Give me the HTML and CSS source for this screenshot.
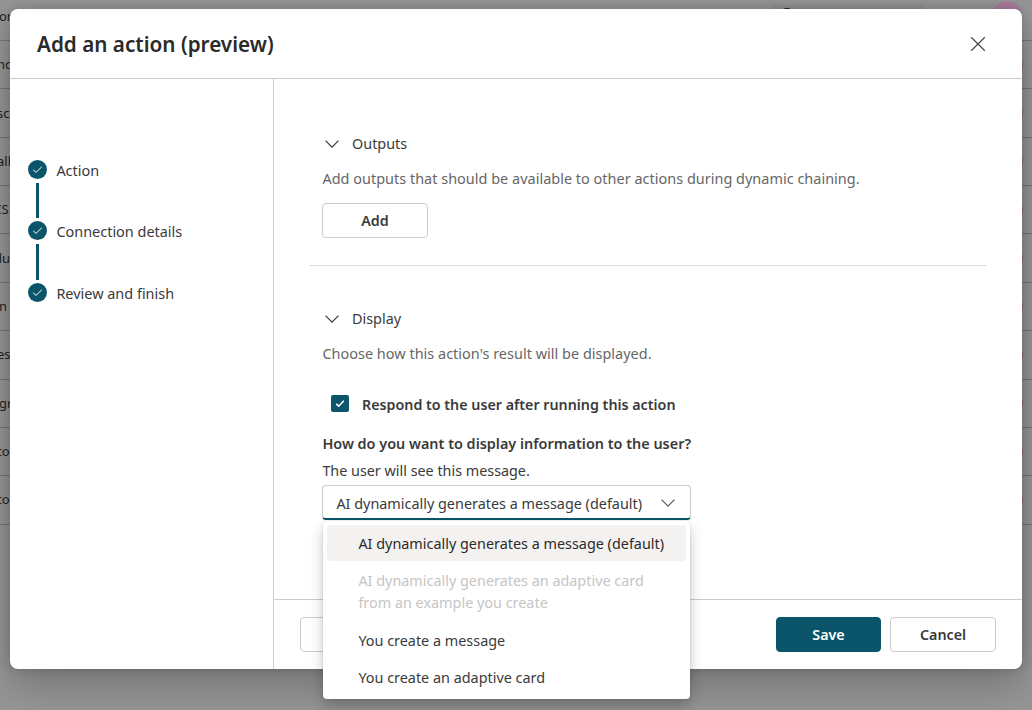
FILE: index.html
```html
<!DOCTYPE html>
<html lang="en">
<head>
<meta charset="utf-8">
<title>Add an action (preview)</title>
<link rel="stylesheet" href="styles.css">
</head>
<body>
<div class="page" aria-hidden="true">
  <div class="row row-top"><span>or</span><div class="search"><svg width="12" height="12" viewBox="0 0 12 12"><circle cx="6" cy="6" r="4.6" fill="none" stroke="#222" stroke-width="1.4"/></svg></div><i class="avatar"></i></div>
  <div class="row"><span class="cut">nd</span><i class="dot"></i></div>
  <div class="row"><span class="cut">sca</span><i class="dot"></i></div>
  <div class="row"><span class="cut">all</span><i class="dot"></i></div>
  <div class="row"><span class="cut">IS</span><i class="dot"></i></div>
  <div class="row"><span class="cut-wide">du</span><i class="dot"></i></div>
  <div class="row"><span>n</span><i class="dot"></i></div>
  <div class="row"><span class="cut">es</span><i class="dot"></i></div>
  <div class="row"><span>gr</span><i class="dot"></i></div>
  <div class="row"><span class="cut">tor</span><i class="dot"></i></div>
  <div class="row"><span class="cut">tor</span><i class="dot"></i></div>
</div>
<div class="dialog" role="dialog">
  <header class="head">
    <h1>Add an action (preview)</h1>
    <svg class="close" width="16" height="16" viewBox="0 0 16 16"><path d="M1.2 1.2 14.8 14.8M14.8 1.2 1.2 14.8" fill="none" stroke="#4a4a4a" stroke-width="1.25"/></svg>
  </header>
  <div class="body">
    <nav class="steps">
      <div class="step"><span class="badge"><svg width="19" height="19" viewBox="0 0 19 19"><path d="M5.2 9.8 8 12.4 13.8 6.8" fill="none" stroke="#fff" stroke-width="1"/></svg></span><span>Action</span></div>
      <div class="bar"></div>
      <div class="step"><span class="badge"><svg width="19" height="19" viewBox="0 0 19 19"><path d="M5.2 9.8 8 12.4 13.8 6.8" fill="none" stroke="#fff" stroke-width="1"/></svg></span><span>Connection details</span></div>
      <div class="bar"></div>
      <div class="step"><span class="badge"><svg width="19" height="19" viewBox="0 0 19 19"><path d="M5.2 9.8 8 12.4 13.8 6.8" fill="none" stroke="#fff" stroke-width="1"/></svg></span><span>Review and finish</span></div>
    </nav>
    <main class="main">
      <div class="content">
        <section class="outputs">
          <h2><svg width="16" height="16" viewBox="0 0 16 16"><path d="M1.5 4.7 8 11.2 14.5 4.7" fill="none" stroke="#333" stroke-width="1.15"/></svg>Outputs</h2>
          <p class="hint">Add outputs that should be available to other actions during dynamic chaining.</p>
          <button class="btn">Add</button>
        </section>
        <div class="rule"></div>
        <section class="display">
          <h2><svg width="16" height="16" viewBox="0 0 16 16"><path d="M1.5 4.7 8 11.2 14.5 4.7" fill="none" stroke="#333" stroke-width="1.15"/></svg>Display</h2>
          <p class="hint">Choose how this action's result will be displayed.</p>
          <div class="check"><span class="box"><svg width="18" height="17" viewBox="0 0 18 17"><path d="M5.2 8.8 7.7 11.2 12.8 5.7" fill="none" stroke="#fff" stroke-width="1.6"/></svg></span><span>Respond to the user after running this action</span></div>
          <div class="label">How do you want to display information to the user?</div>
          <p class="sub">The user will see this message.</p>
          <div class="combo">
            <div class="select"><span>AI dynamically generates a message (default)</span><svg width="16" height="16" viewBox="0 0 16 16"><path d="M1.5 4.7 8 11.2 14.5 4.7" fill="none" stroke="#555" stroke-width="1.15"/></svg></div>
            <ul class="menu">
              <li class="current">AI dynamically generates a message (default)</li>
              <li class="disabled">AI dynamically generates an adaptive card from an example you create</li>
              <li>You create a message</li>
              <li>You create an adaptive card</li>
            </ul>
          </div>
        </section>
      </div>
      <footer class="foot">
        <button class="btn back"></button>
        <button class="btn primary">Save</button>
        <button class="btn">Cancel</button>
      </footer>
    </main>
  </div>
</div>
</body>
</html>
```
FILE: styles.css
```css
* { box-sizing: border-box; }
body {
  margin: 0;
  width: 1032px;
  height: 710px;
  overflow: hidden;
  background: #969696;
  font: 14.45px/22px "Noto Sans", sans-serif;
  color: #3a3a3a;
}
h1, h2, p, ul { margin: 0; padding: 0; }
svg { display: block; flex: none; }

/* Dimmed list behind the dialog */
.page {
  position: absolute;
  inset: 0;
  overflow: hidden;
  font-size: 13px;
  color: #222;
}
.row {
  display: flex;
  align-items: center;
  justify-content: space-between;
  height: 48.36px;
  border-bottom: 1px solid #777;
}
.row span { width: 30px; margin: -1px 0 0 -1px; white-space: nowrap; }
.row .cut { margin-left: -3px; }
.row .cut-wide { margin-left: -6px; }
.row-top { height: 41px; }
.row-top span { margin-top: -8px; }
.search {
  width: 152px;
  height: 32px;
  margin: 0 0 0 auto;
  padding: 3px 9px;
  border-radius: 4px;
  background: #92918e;
}
.avatar {
  width: 30px;
  height: 30px;
  margin: -9px 10px 0 68px;
  border-radius: 50%;
  background: #a87c9b;
}
.dot {
  width: 24px;
  height: 24px;
  margin-right: 9px;
  border-radius: 50%;
  background: #8c6480;
}

.dialog {
  position: absolute;
  top: 9px;
  left: 10px;
  width: 1012px;
  height: 660px;
  display: flex;
  flex-direction: column;
  border-radius: 8px;
  background: #fff;
  box-shadow: 0 0 8px rgba(0, 0, 0, .16), 0 14px 42px rgba(0, 0, 0, .26);
}
.head {
  display: flex;
  align-items: center;
  justify-content: space-between;
  height: 70px;
  padding: 1px 36px 0 27px;
  border-bottom: 1px solid #ccc;
}
h1 {
  font-size: 20.7px;
  font-weight: 600;
  line-height: 28px;
  color: #2b2a29;
}
.body { display: flex; flex: 1; min-height: 0; }
.steps {
  width: 264px;
  padding: 80px 0 0 18px;
  border-right: 1px solid #ccc;
}
.step { display: flex; align-items: center; gap: 9.4px; height: 20px; }
.step > span:last-child { padding-top: 3px; }
.badge { width: 19px; height: 19px; border-radius: 50%; background: #0b556a; }
.bar { width: 3px; height: 35.5px; margin: 3.5px 0 2.7px 8px; background: #0b556a; }

.main { display: flex; flex: 1; flex-direction: column; }
.content { flex: 1; padding: 53px 35px 0; }
.outputs, .display { padding-left: 13px; }
h2 {
  display: flex;
  align-items: center;
  gap: 12px;
  height: 24px;
  padding-left: 2px;
  font-size: 14.4px;
  font-weight: 400;
}
.hint { margin-top: 12px; padding-left: .4px; font-size: 14.45px; letter-spacing: .02px; color: #666; }
.btn {
  width: 106px;
  height: 35px;
  padding: 0;
  border: 1px solid #ccc;
  border-radius: 4px;
  background: #fff;
  font: 600 14.3px/20px "Noto Sans", sans-serif;
  color: #3a3a3a;
}
.outputs .btn { display: block; margin-top: 13px; }
.rule { height: 1px; margin: 27px 0 41px; background: #dcdcdc; }
.check {
  display: flex;
  align-items: flex-start;
  gap: 13px;
  height: 22px;
  margin: 29px 0 17px 9px;
  font-size: 14.27px;
  font-weight: 600;
}
.check .box { width: 18px; height: 17px; margin-top: 1px; border-radius: 2px; background: #0b556a; }
.label { padding-left: .4px; font-size: 14.42px; font-weight: 600; }
.sub { margin: 5px 0 3px; padding-left: .4px; font-size: 14.35px; }
.combo { position: relative; width: 369px; font-size: 14.4px; }
.select {
  display: flex;
  align-items: center;
  justify-content: space-between;
  height: 35px;
  padding: 2px 14px 0 13.4px;
  border: 1px solid #ccc;
  border-bottom: 2px solid #0b556a;
  border-radius: 4px;
}
.select span { padding-top: 1px; }
.menu {
  position: absolute;
  z-index: 2;
  top: 36px;
  left: 1px;
  width: 367px;
  height: 178px;
  padding: 4px 4px 3px;
  display: flex;
  flex-direction: column;
  gap: 1.4px;
  list-style: none;
  border-radius: 4px;
  background: #fff;
  box-shadow: 0 0 2px rgba(0, 0, 0, .18), 0 7px 14px rgba(0, 0, 0, .22);
}
.menu li { padding: 8px 20px 6px 31.4px; border-radius: 4px; }
.menu .current { background: #f3f2f1; color: #2b2a29; }
.menu .disabled { color: #c5c5c5; }

.foot {
  display: flex;
  align-items: center;
  gap: 9px;
  height: 70px;
  padding: 0 26px;
  border-top: 1px solid #ccc;
}
.foot .back { margin-right: auto; }
.foot .primary { width: 105px; border-color: #0b556a; background: #0b556a; color: #fff; }
```
